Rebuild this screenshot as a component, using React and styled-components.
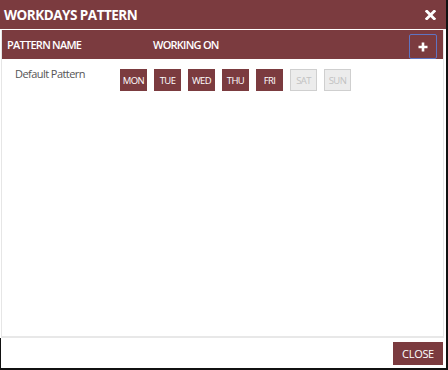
import React from "react";
import styled, { createGlobalStyle } from "styled-components";

const MAROON = "#7b3b3f";

const GlobalStyle = createGlobalStyle`
  body {
    margin: 0;
    background: #fff;
    font-family: "Open Sans", "Liberation Sans", sans-serif;
  }
`;

const Dialog = styled.div`
  width: 448px;
  height: 370px;
  box-sizing: border-box;
  border-right: 2px solid #111;
  border-bottom: 2px solid #111;
  display: flex;
  flex-direction: column;
  background: #fff;
`;

const TitleBar = styled.div`
  height: 29px;
  flex: none;
  background: ${MAROON};
  display: flex;
  align-items: center;
  justify-content: space-between;
  padding: 0 10px 0 4px;
  color: #fff;
`;

const Title = styled.h1`
  margin: 0;
  font-size: 13.5px;
  font-weight: 700;
  letter-spacing: -0.5px;
`;

const IconButton = styled.button`
  border: none;
  background: none;
  padding: 0;
  display: flex;
  cursor: pointer;
`;

const Panel = styled.div`
  flex: 1;
  margin: 1px 2px 0 1px;
  border-left: 1px solid #e6e6e6;
  border-right: 1px solid #e6e6e6;
  border-bottom: 2px solid #e8e8e8;
  display: flex;
  flex-direction: column;
`;

const HeaderRow = styled.div`
  height: 29px;
  background: ${MAROON};
  display: flex;
  align-items: center;
  color: #fff;
  font-size: 11px;
  font-weight: 600;
`;

const HeaderCell = styled.div`
  width: ${({ $width }) => ($width ? `${$width}px` : "auto")};
  flex: ${({ $width }) => ($width ? "none" : 1)};
  padding-left: 5px;
  box-sizing: border-box;
  letter-spacing: -0.75px;
`;

const AddButton = styled.button`
  align-self: flex-end;
  width: 28px;
  height: 25px;
  margin-right: 6px;
  border: 1px solid #5f74c2;
  border-radius: 2px;
  background: transparent;
  display: flex;
  align-items: center;
  justify-content: center;
  padding: 0;
  cursor: pointer;
`;

const BodyRow = styled.div`
  display: grid;
  grid-template-columns: 118px 1fr;
  padding-top: 7px;
`;

const PatternName = styled.div`
  padding-left: 13px;
  font-size: 11px;
  color: #555;
  letter-spacing: -0.55px;
`;

const Days = styled.div`
  display: flex;
  gap: 7px;
  padding-top: 3px;
`;

const Day = styled.span`
  width: 27px;
  height: 22px;
  box-sizing: border-box;
  display: flex;
  align-items: center;
  justify-content: center;
  font-size: 9.5px;
  letter-spacing: -0.6px;
  background: ${({ $active }) => ($active ? MAROON : "#ececec")};
  color: ${({ $active }) => ($active ? "#fff" : "#c2c2c2")};
  border: 1px solid ${({ $active }) => ($active ? MAROON : "#cfcfcf")};
`;

const Footer = styled.div`
  height: 30px;
  flex: none;
  border-left: 1px solid #111;
  display: flex;
  align-items: center;
  justify-content: flex-end;
  padding-right: 3px;
`;

const CloseButton = styled.button`
  width: 50px;
  height: 23px;
  border: none;
  background: ${MAROON};
  color: #fff;
  font-family: inherit;
  font-size: 11px;
  letter-spacing: -0.3px;
  padding: 0;
  cursor: pointer;
`;

const days = [
  { label: "MON", active: true },
  { label: "TUE", active: true },
  { label: "WED", active: true },
  { label: "THU", active: true },
  { label: "FRI", active: true },
  { label: "SAT", active: false },
  { label: "SUN", active: false },
];

export default function App() {
  return (
    <>
      <GlobalStyle />
      <Dialog>
        <TitleBar>
          <Title>WORKDAYS PATTERN</Title>
          <IconButton aria-label="Close">
            <svg width="11" height="10" viewBox="0 0 11 10">
              <path d="M1.8 1.3L9.2 8.7M9.2 1.3L1.8 8.7" stroke="#fff" strokeWidth="2.8" strokeLinecap="square" />
            </svg>
          </IconButton>
        </TitleBar>
        <Panel>
          <HeaderRow>
            <HeaderCell $width={146}>PATTERN NAME</HeaderCell>
            <HeaderCell>WORKING ON</HeaderCell>
            <AddButton aria-label="Add pattern">
              <svg width="10" height="10" viewBox="0 0 10 10">
                <path d="M5 0.5V9.5M0.5 5H9.5" stroke="#fff" strokeWidth="2.6" />
              </svg>
            </AddButton>
          </HeaderRow>
          <BodyRow>
            <PatternName>Default Pattern</PatternName>
            <Days>
              {days.map((d) => (
                <Day key={d.label} $active={d.active}>
                  {d.label}
                </Day>
              ))}
            </Days>
          </BodyRow>
        </Panel>
        <Footer>
          <CloseButton>CLOSE</CloseButton>
        </Footer>
      </Dialog>
    </>
  );
}
